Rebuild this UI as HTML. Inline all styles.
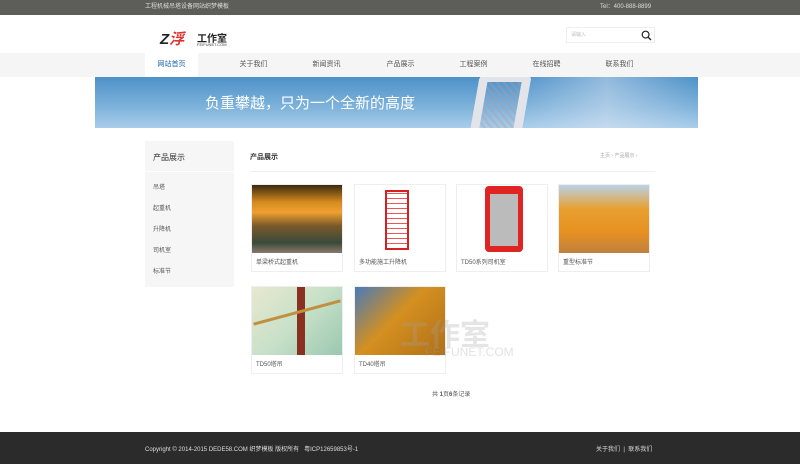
<!DOCTYPE html>
<html><head><meta charset="utf-8"><style>
*{margin:0;padding:0;box-sizing:border-box}
body{width:800px;height:464px;position:relative;background:#fff;font-family:"Liberation Sans","Noto Sans CJK SC",sans-serif;overflow:hidden;color:#555}
.a{position:absolute}
.top{left:0;top:0;width:800px;height:15px;background:#5d5d59;color:#ddd;font-size:6px;line-height:15px}
.nav{left:0;top:53px;width:800px;height:24px;background:#f5f5f5;font-size:7px;color:#555}
.nav span{position:absolute;top:0;line-height:24px;width:53px;text-align:center}
.card{width:92px;height:88px;border:1px solid #eee;background:#fff}
.card .img{width:90px;height:68px}
.card p{font-size:6px;line-height:20px;padding-left:4px;color:#555}
.side p{font-size:6px;color:#555;position:absolute;left:8px}
</style></head><body>
<div class="a top"><span class="a" style="left:145px">工程机械吊塔设备网站织梦模板</span><span class="a" style="left:600px">Tel：400-888-8899</span></div>
<div class="a" style="left:160px;top:28px;font-size:15px;font-weight:bold;color:#222;font-style:italic">Z<span style="color:#d33">浮</span></div>
<div class="a" style="left:197px;top:30px;font-size:10px;font-weight:bold;color:#222">工作室</div>
<div class="a" style="left:197px;top:42px;font-size:4px;color:#444">FEIFUNET.COM</div>
<div class="a" style="left:566px;top:27px;width:89px;height:16px;border:1px solid #eee;font-size:5px;color:#bbb;line-height:14px;padding-left:4px">请输入
<svg class="a" style="right:2px;top:2px" width="11" height="11" viewBox="0 0 11 11"><circle cx="4.6" cy="4.6" r="3.4" fill="none" stroke="#222" stroke-width="1.2"/><line x1="7" y1="7" x2="10" y2="10" stroke="#222" stroke-width="1.3"/></svg></div>
<div class="a nav">
<span style="left:145px;background:#fff;color:#1a5fa8">网站首页</span>
<span style="left:227px">关于我们</span><span style="left:300px">新闻资讯</span><span style="left:374px">产品展示</span><span style="left:447px">工程案例</span><span style="left:520px">在线招聘</span><span style="left:593px">联系我们</span></div>
<div class="a" style="left:95px;top:77px;width:603px;height:51px;background:linear-gradient(180deg,#4d91c8 0%,#7fb3db 60%,#a9cdea 100%);overflow:hidden">
<div class="a" style="left:110px;top:15px;font-size:15px;color:#fff">负重攀越，只为一个全新的高度</div>
<div class="a" style="left:420px;top:0;width:183px;height:51px;background:linear-gradient(90deg,rgba(255,255,255,0),rgba(230,235,245,.45) 50%,rgba(255,255,255,0))"></div>
<div class="a" style="left:380px;top:-4px;width:52px;height:58px;border:9px solid #e2e4ea;border-bottom:none;border-radius:8px 8px 0 0;transform:skewX(-10deg);background:repeating-linear-gradient(45deg,rgba(190,150,150,.35) 0 2px,transparent 2px 5px)"></div>
</div>
<div class="a side" style="left:145px;top:141px;width:89px;height:146px;background:#f6f6f6">
<div class="a" style="left:8px;top:11px;font-size:8px;color:#333">产品展示</div>
<div class="a" style="left:0;top:30px;width:89px;height:1px;background:#fff"></div>
<p style="top:41px">吊塔</p><p style="top:62px">起重机</p><p style="top:83px">升降机</p><p style="top:104px">司机室</p><p style="top:125px">标准节</p></div>
<div class="a" style="left:250px;top:152px;font-size:7px;color:#333;font-weight:bold">产品展示</div>
<div class="a" style="left:600px;top:152px;font-size:5px;color:#aaa">主页 › 产品展示 ›</div>
<div class="a" style="left:250px;top:171px;width:405px;height:1px;background:#f0f0f0"></div>
<div class="a card" style="left:251px;top:184px"><div class="img" style="background:linear-gradient(180deg,#3a2a10 0%,#d58a1e 25%,#f0a030 40%,#7a5a2a 60%,#3a4a3a 85%,#8a7a6a 100%)"></div><p>单梁桥式起重机</p></div>
<div class="a card" style="left:354px;top:184px"><div class="img" style="background:#fff;position:relative"><div class="a" style="left:30px;top:5px;width:24px;height:60px;border:2px solid #d42020;background:repeating-linear-gradient(0deg,#fff 0 4px,#e55 4px 5px)"></div></div><p>多功能施工升降机</p></div>
<div class="a card" style="left:456px;top:184px"><div class="img" style="background:#fff;position:relative"><div class="a" style="left:28px;top:1px;width:38px;height:66px;background:#e02424;border-radius:4px"><div class="a" style="left:5px;top:8px;width:28px;height:52px;background:#bbb"></div></div></div><p>TD50系列司机室</p></div>
<div class="a card" style="left:558px;top:184px"><div class="img" style="background:linear-gradient(180deg,#b8d2e6 0%,#e8a030 35%,#e69020 70%,#c08040 100%)"></div><p>重型标准节</p></div>
<div class="a card" style="left:251px;top:286px"><div class="img" style="background:linear-gradient(135deg,#e8e8d0,#c8e0c8 50%,#9ac8b0);position:relative"><div class="a" style="left:45px;top:0;width:8px;height:68px;background:#8a3020"></div><div class="a" style="left:0;top:24px;width:90px;height:3px;background:#c09040;transform:rotate(-15deg)"></div></div><p>TD50塔吊</p></div>
<div class="a card" style="left:354px;top:286px"><div class="img" style="background:linear-gradient(135deg,#4a7ab8 0%,#d49020 45%,#b07018 100%)"></div><p>TD40塔吊</p></div>
<div class="a" style="left:400px;top:310px;font-size:30px;font-weight:bold;color:rgba(160,160,160,.28)">工作室</div>
<div class="a" style="left:425px;top:345px;font-size:12px;color:rgba(160,160,160,.3)">FEIFUNET.COM</div>
<div class="a" style="left:432px;top:389px;font-size:6px;color:#555">共 <b>1</b>页<b>6</b>条记录</div>
<div class="a" style="left:0;top:432px;width:800px;height:32px;background:#2b2b2b;color:#ddd;font-size:6px;line-height:36px">
<span class="a" style="left:145px">Copyright © 2014-2015 DEDE58.COM 织梦模板 版权所有 &nbsp; 粤ICP12659853号-1</span>
<span class="a" style="left:596px">关于我们 &nbsp;|&nbsp; 联系我们</span></div>
</body></html>
